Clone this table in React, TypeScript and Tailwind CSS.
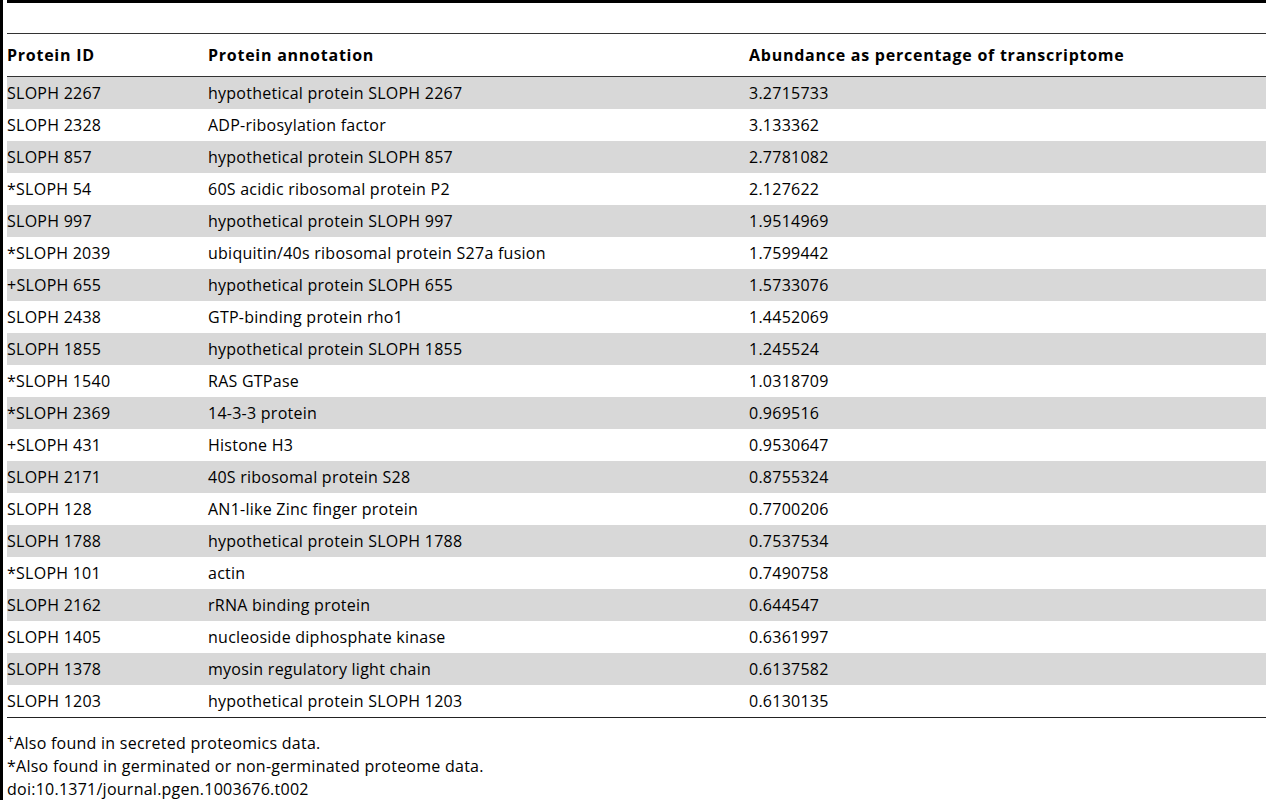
import React from "react"

const rows: [string, string, string][] = [
  ["SLOPH 2267", "hypothetical protein SLOPH 2267", "3.2715733"],
  ["SLOPH 2328", "ADP-ribosylation factor", "3.133362"],
  ["SLOPH 857", "hypothetical protein SLOPH 857", "2.7781082"],
  ["*SLOPH 54", "60S acidic ribosomal protein P2", "2.127622"],
  ["SLOPH 997", "hypothetical protein SLOPH 997", "1.9514969"],
  ["*SLOPH 2039", "ubiquitin/40s ribosomal protein S27a fusion", "1.7599442"],
  ["+SLOPH 655", "hypothetical protein SLOPH 655", "1.5733076"],
  ["SLOPH 2438", "GTP-binding protein rho1", "1.4452069"],
  ["SLOPH 1855", "hypothetical protein SLOPH 1855", "1.245524"],
  ["*SLOPH 1540", "RAS GTPase", "1.0318709"],
  ["*SLOPH 2369", "14-3-3 protein", "0.969516"],
  ["+SLOPH 431", "Histone H3", "0.9530647"],
  ["SLOPH 2171", "40S ribosomal protein S28", "0.8755324"],
  ["SLOPH 128", "AN1-like Zinc finger protein", "0.7700206"],
  ["SLOPH 1788", "hypothetical protein SLOPH 1788", "0.7537534"],
  ["*SLOPH 101", "actin", "0.7490758"],
  ["SLOPH 2162", "rRNA binding protein", "0.644547"],
  ["SLOPH 1405", "nucleoside diphosphate kinase", "0.6361997"],
  ["SLOPH 1378", "myosin regulatory light chain", "0.6137582"],
  ["SLOPH 1203", "hypothetical protein SLOPH 1203", "0.6130135"],
]

export default function App(): JSX.Element {
  return (
    <div
      className="flex min-h-[800px] w-[1266px] bg-white text-[16px] tracking-[0.25px] text-black"
      style={{ fontFamily: '"Open Sans", "Liberation Sans", sans-serif' }}
    >
      <div className="w-[3px] shrink-0 bg-black" />
      <div className="ml-1 flex-1">
        <div className="h-[3px] bg-black" />
        <div className="h-[30px]" />
        <div className="border-t border-[#333]">
          <div className="grid h-[43px] grid-cols-[201px_541px_1fr] items-center border-b border-[#333] font-bold tracking-[0.75px]">
            <div>Protein ID</div>
            <div>Protein annotation</div>
            <div>Abundance as percentage of transcriptome</div>
          </div>
          {rows.map((r, i) => (
            <div
              key={r[0]}
              className={
                i % 2 === 0
                  ? "grid h-8 grid-cols-[201px_541px_1fr] items-center bg-[#d8d8d8]"
                  : "grid h-8 grid-cols-[201px_541px_1fr] items-center bg-white"
              }
            >
              <div>{r[0]}</div>
              <div>{r[1]}</div>
              <div>{r[2]}</div>
            </div>
          ))}
          <div className="border-t border-[#222]" />
        </div>
        <div className="pt-[14px] leading-[23px]">
          <div>
            <sup className="text-[12px]">+</sup>Also found in secreted proteomics data.
          </div>
          <div>*Also found in germinated or non-germinated proteome data.</div>
          <div>doi:10.1371/journal.pgen.1003676.t002</div>
        </div>
      </div>
    </div>
  )
}
